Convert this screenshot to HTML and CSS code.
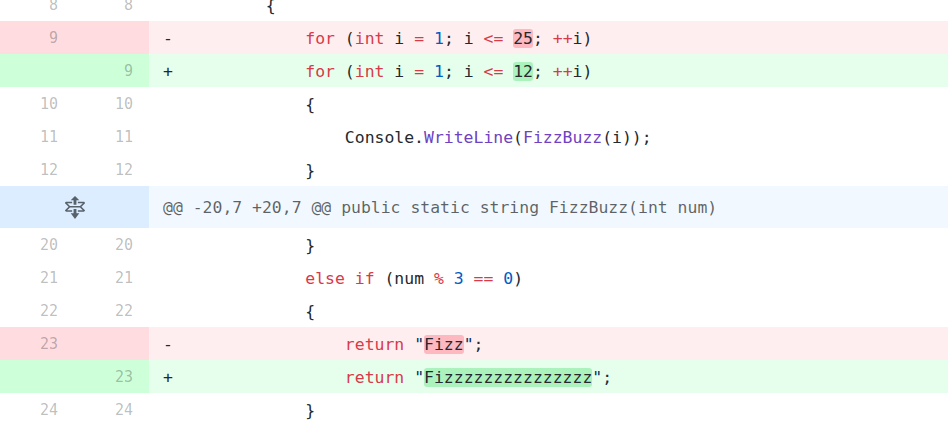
FILE: index.html
```html
<!DOCTYPE html>
<html>
<head>
<meta charset="utf-8">
<link rel="stylesheet" href="styles.css">
</head>
<body>
<div class="diff">
  <div class="row ctx"><div class="num">8</div><div class="num">8</div><div class="code"><span class="mark"> </span><span class="src">        {</span></div></div>
  <div class="row del"><div class="num">9</div><div class="num"></div><div class="code"><span class="mark">-</span><span class="src">            <span class="k">for</span> (<span class="k">int</span> i <span class="k">=</span> <span class="c">1</span>; i <span class="k">&lt;=</span> <span class="x">25</span>; <span class="k">++</span>i)</span></div></div>
  <div class="row add"><div class="num"></div><div class="num">9</div><div class="code"><span class="mark">+</span><span class="src">            <span class="k">for</span> (<span class="k">int</span> i <span class="k">=</span> <span class="c">1</span>; i <span class="k">&lt;=</span> <span class="x">12</span>; <span class="k">++</span>i)</span></div></div>
  <div class="row ctx"><div class="num">10</div><div class="num">10</div><div class="code"><span class="mark"> </span><span class="src">            {</span></div></div>
  <div class="row ctx"><div class="num">11</div><div class="num">11</div><div class="code"><span class="mark"> </span><span class="src">                Console.<span class="e">WriteLine</span>(<span class="e">FizzBuzz</span>(i));</span></div></div>
  <div class="row ctx"><div class="num">12</div><div class="num">12</div><div class="code"><span class="mark"> </span><span class="src">            }</span></div></div>
  <div class="row hunk">
    <div class="expand">
      <svg width="20" height="23" viewBox="0 0 14 16" aria-hidden="true"><path fill="#586069" fill-rule="evenodd" d="M11.5 7.5L14 10c0 .55-.45 1-1 1H9v-1h3.5l-2-2h-7l-2 2H5v1H1c-.55 0-1-.45-1-1l2.5-2.5L0 5c0-.55.45-1 1-1h4v1H1.5l2 2h7l2-2H9V4h4c.55 0 1 .45 1 1l-2.5 2.5zM6 6h2V3h2L7 0 4 3h2v3zm2 3H6v3H4l3 4 3-4H8V9z"/></svg>
    </div>
    <div class="code hunk-text">@@ -20,7 +20,7 @@ public static string FizzBuzz(int num)</div>
  </div>
  <div class="row ctx"><div class="num">20</div><div class="num">20</div><div class="code"><span class="mark"> </span><span class="src">            }</span></div></div>
  <div class="row ctx"><div class="num">21</div><div class="num">21</div><div class="code"><span class="mark"> </span><span class="src">            <span class="k">else if</span> (num <span class="k">%</span> <span class="c">3</span> <span class="k">==</span> <span class="c">0</span>)</span></div></div>
  <div class="row ctx"><div class="num">22</div><div class="num">22</div><div class="code"><span class="mark"> </span><span class="src">            {</span></div></div>
  <div class="row del"><div class="num">23</div><div class="num"></div><div class="code"><span class="mark">-</span><span class="src">                <span class="k">return</span> <span class="s">"<span class="x">Fizz</span>"</span>;</span></div></div>
  <div class="row add"><div class="num"></div><div class="num">23</div><div class="code"><span class="mark">+</span><span class="src">                <span class="k">return</span> <span class="s">"<span class="x">Fizzzzzzzzzzzzzzz</span>"</span>;</span></div></div>
  <div class="row ctx"><div class="num">24</div><div class="num">24</div><div class="code"><span class="mark"> </span><span class="src">            }</span></div></div>
</div>
</body>
</html>
```
FILE: styles.css
```css
html, body {
  margin: 0;
  padding: 0;
  background: #ffffff;
  overflow: hidden;
}

.diff {
  margin-top: -12px;
  font-family: "DejaVu Sans Mono", "Liberation Mono", monospace;
  font-size: 16.45px;
  color: #24292e;
}

.row {
  display: grid;
  grid-template-columns: 74px 75px 1fr;
  height: 33px;
  line-height: 31px;
}

.num,
.code {
  padding-top: 2px;
}

.num {
  text-align: right;
  padding-right: 16px;
  font-size: 15px;
  color: rgba(27, 31, 35, 0.3);
}

.code {
  padding-left: 14px;
  white-space: pre;
}

.mark {
  display: inline-block;
  width: 23.5px;
  white-space: pre;
}

.src {
  white-space: pre;
}

.del .num { background: #ffdce0; }
.del .code { background: #ffeef0; }
.add .num { background: #cdffd8; }
.add .code { background: #e6ffed; }

.del .x { background: #fdb8c0; }
.add .x { background: #acf2bd; }

.x {
  border-radius: 3px;
  color: #24292e;
}

.k { color: #d73a49; }
.c { color: #005cc5; }
.e { color: #6f42c1; }
.s { color: #032f62; }

.hunk {
  height: 42px;
  line-height: 41px;
}

.hunk .code {
  padding-top: 1px;
}

.expand {
  grid-column: 1 / 3;
  background: #dbedff;
  display: flex;
  align-items: center;
  justify-content: center;
}

.expand svg {
  display: block;
}

.hunk-text {
  background: #f1f8ff;
  color: rgba(27, 31, 35, 0.7);
}
```
